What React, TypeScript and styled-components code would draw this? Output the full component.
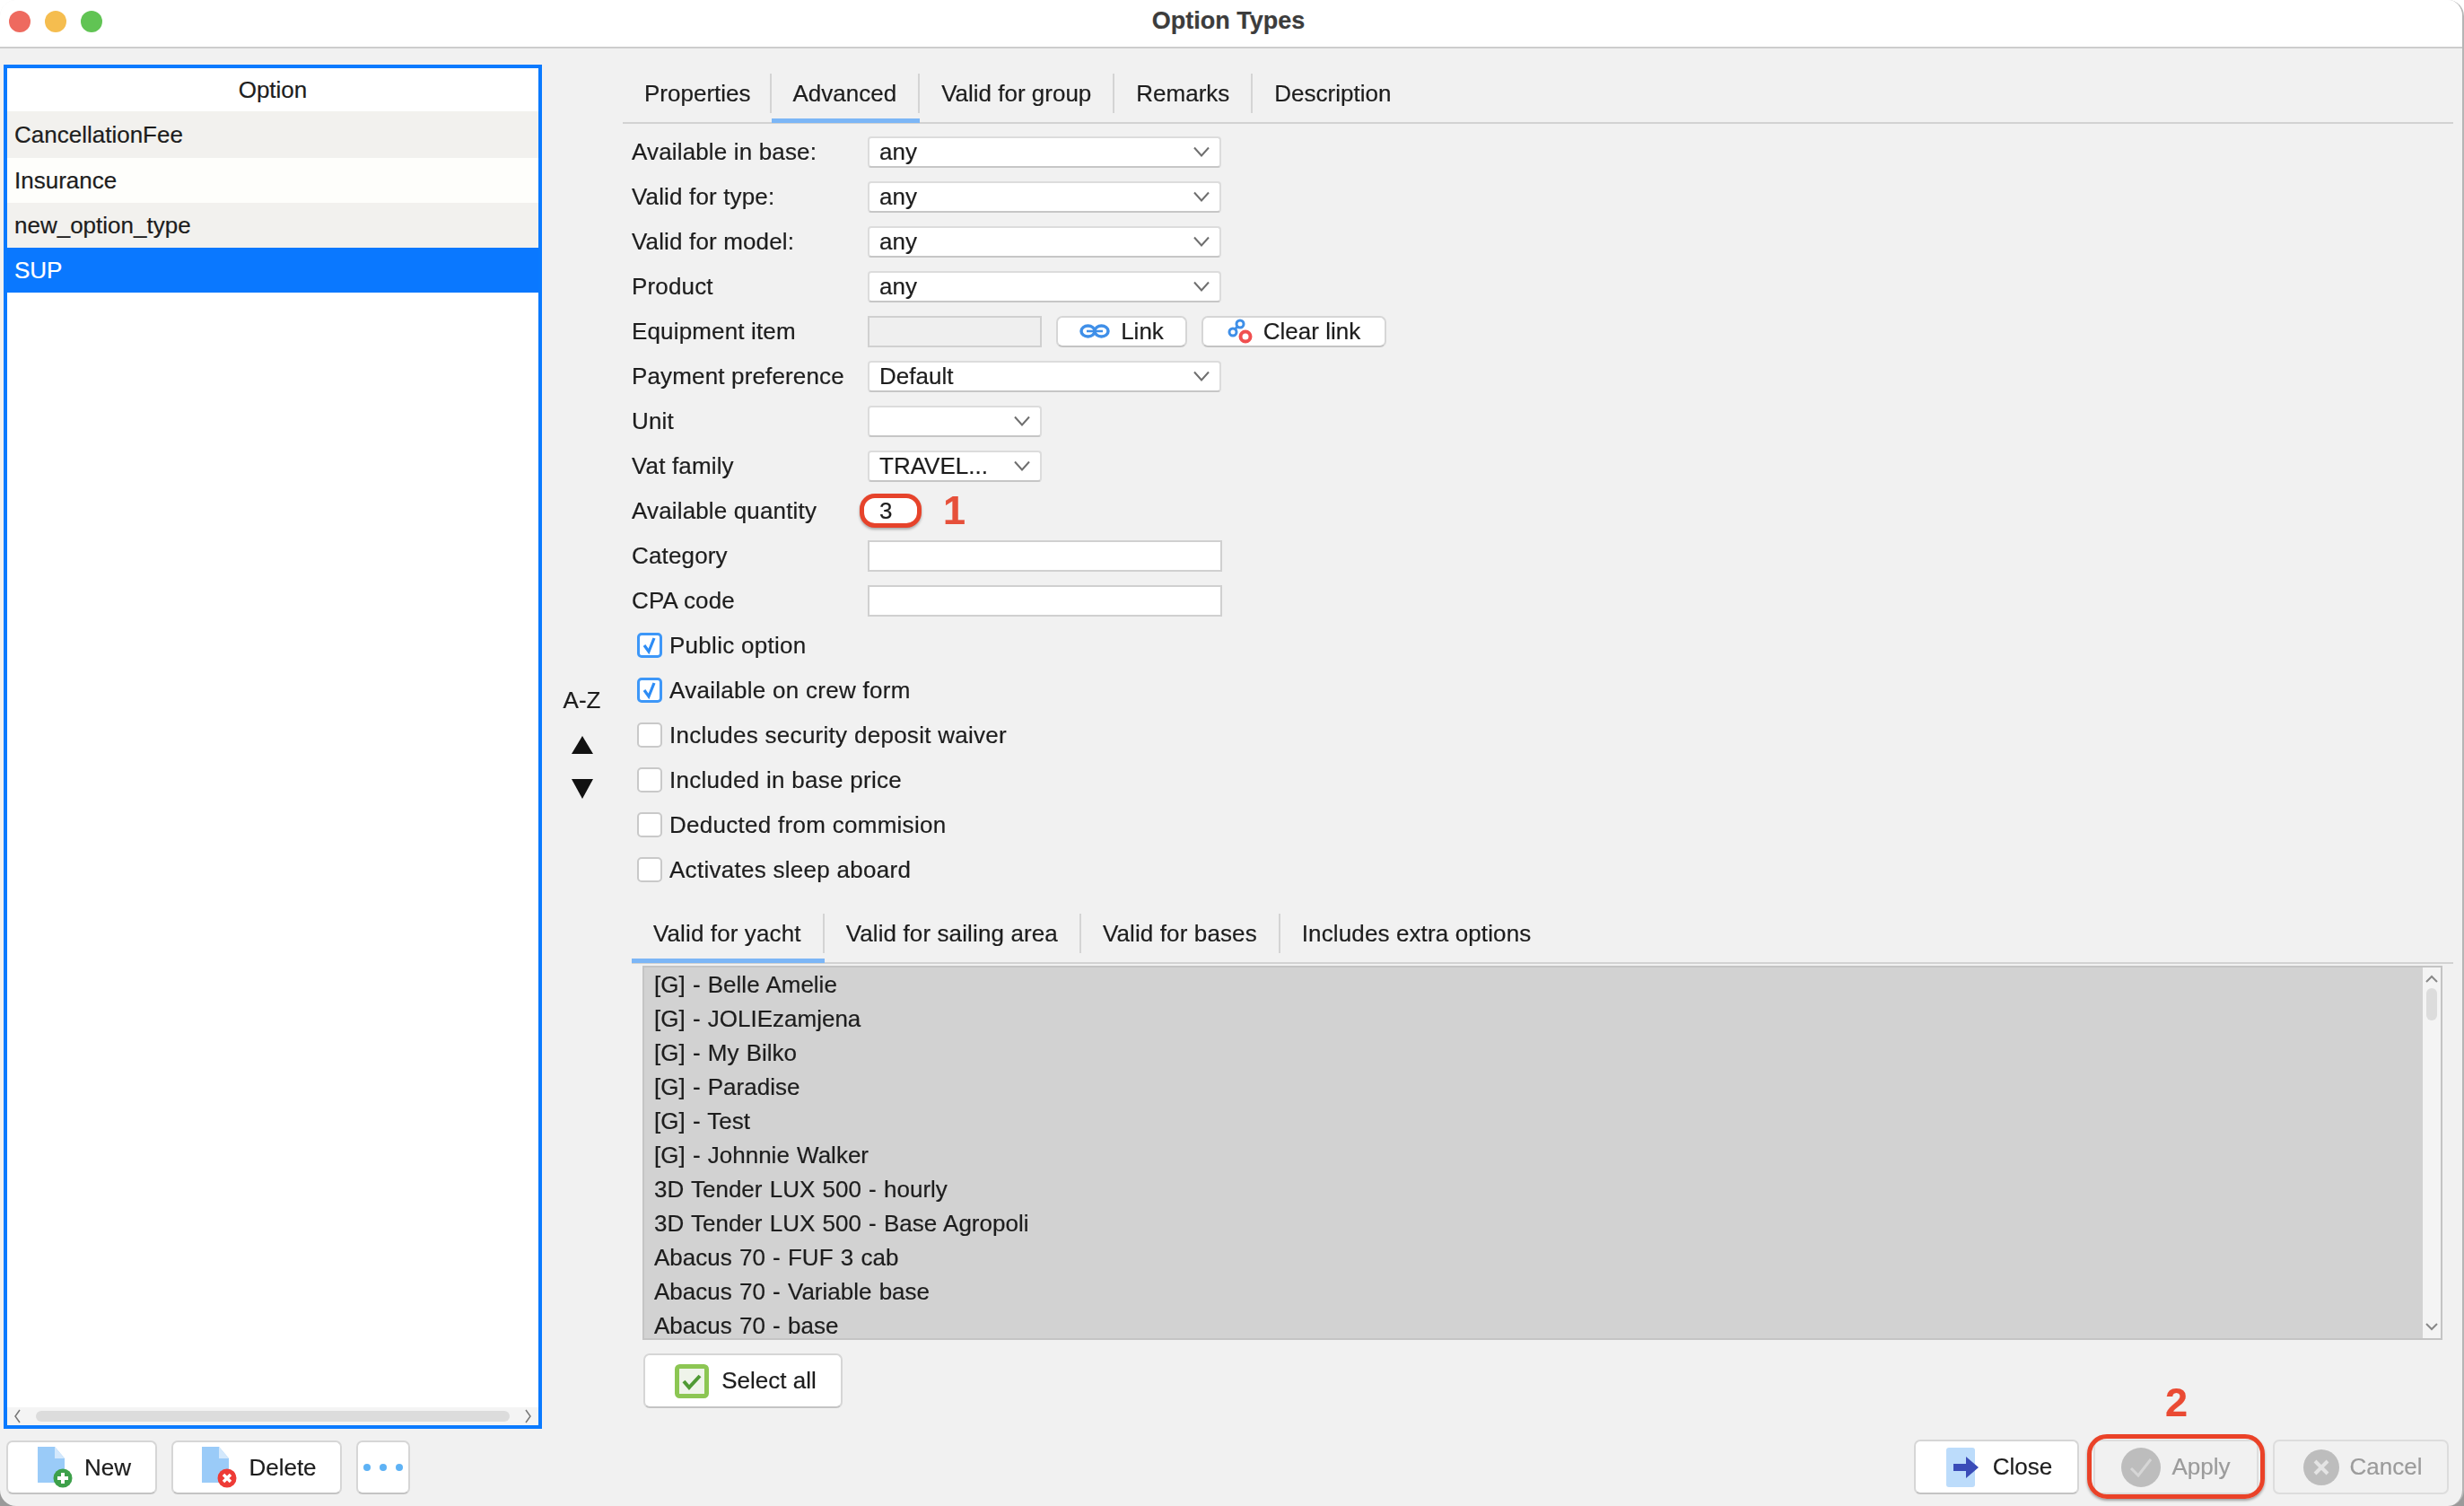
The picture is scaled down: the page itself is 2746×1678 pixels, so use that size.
import styled, { createGlobalStyle } from 'styled-components';

const GlobalStyle = createGlobalStyle`
  html, body { margin: 0; padding: 0; background: linear-gradient(#ffffff 50%, #9a9a9a 50%); }
  body {
    font-family: "Liberation Sans", Arial, sans-serif;
    font-size: 26px;
    color: #1d1d1d;
    -webkit-text-stroke: 0.2px currentColor;
  }
`;

const Window = styled.div`
  width: 2746px;
  height: 1678px;
  box-sizing: border-box;
  display: flex;
  flex-direction: column;
  overflow: hidden;
  background: #f1f1f1;
  border-right: 2px solid #b5b5b5;
  border-radius: 18px;
  filter: blur(0.45px);
`;

const TitleBar = styled.div`
  height: 54px;
  flex: none;
  box-sizing: border-box;
  position: relative;
  display: flex;
  align-items: center;
  justify-content: center;
  padding: 0 6px 6px 0;
  background: #fff;
  border-bottom: 2px solid #cdcdcd;
`;

const Lights = styled.div`
  position: absolute;
  left: 10px;
  top: 12px;
  display: flex;
  gap: 16px;
`;

const Light = styled.span<{ $color: string }>`
  width: 24px;
  height: 24px;
  border-radius: 50%;
  background: ${(p) => p.$color};
`;

const Title = styled.div`
  font-size: 27px;
  font-weight: 700;
  color: #3c3c3c;
`;

const Main = styled.div`
  flex: 1;
  display: flex;
  padding: 18px 0 0 4px;
  min-height: 0;
`;

const LeftColumn = styled.div`
  width: 600px;
  flex: none;
  display: flex;
  flex-direction: column;
`;

const OptionPanel = styled.div`
  height: 1520px;
  box-sizing: border-box;
  display: flex;
  flex-direction: column;
  background: #fff;
  border: 4px solid #0a7aff;
`;

const OptionHeader = styled.div`
  height: 48px;
  flex: none;
  display: flex;
  align-items: center;
  justify-content: center;
`;

const OptionRow = styled.div<{ $bg: string; $selected?: boolean; $first?: boolean }>`
  height: ${(p) => (p.$first ? 52 : 50)}px;
  flex: none;
  display: flex;
  align-items: center;
  padding-left: 8px;
  background: ${(p) => p.$bg};
  color: ${(p) => (p.$selected ? '#fff' : '#1d1d1d')};
`;

const OptionFill = styled.div`
  flex: 1;
`;

const HScroll = styled.div`
  height: 20px;
  flex: none;
  display: flex;
  align-items: center;
  justify-content: space-between;
  padding: 0 6px;
  background: #f4f4f4;
`;

const HThumb = styled.div`
  width: 528px;
  height: 12px;
  border-radius: 6px;
  background: #dcdcdc;
`;

const BottomLeft = styled.div`
  display: flex;
  gap: 16px;
  margin: 13px 0 0 3px;
`;

const Button = styled.div<{ $width: number; $height?: number; $off?: boolean; $shift?: number; $gap?: number }>`
  width: ${(p) => p.$width}px;
  height: ${(p) => p.$height ?? 60}px;
  box-sizing: border-box;
  flex: none;
  position: relative;
  display: flex;
  align-items: center;
  justify-content: center;
  gap: ${(p) => p.$gap ?? 12}px;
  padding-left: ${(p) => p.$shift ?? 0}px;
  border-radius: 7px;
  border: 2px solid ${(p) => (p.$off ? '#dddddd' : '#d6d6d6')};
  border-bottom-color: ${(p) => (p.$off ? '#dddddd' : '#c4c4c4')};
  background: ${(p) => (p.$off ? 'transparent' : '#fff')};
  color: ${(p) => (p.$off ? '#9b9b9b' : '#1d1d1d')};
`;

const ApplyRing = styled.div`
  position: absolute;
  inset: -8px -9px -7px -9px;
  border: 5px solid #ea4228;
  border-radius: 22px;
  box-shadow: 0 2px 3px rgba(0, 0, 0, 0.35);
`;

const StepTwo = styled.div`
  position: absolute;
  top: -68px;
  left: 78px;
  font-size: 45px;
  font-weight: 700;
  line-height: 50px;
  color: #ea4a33;
`;

const SortColumn = styled.div`
  width: 84px;
  flex: none;
  box-sizing: border-box;
  display: flex;
  flex-direction: column;
  align-items: center;
  padding: 690px 0 0 5px;
  gap: 22px;
`;

const SortLabel = styled.div`
  line-height: 36px;
`;

const SortDown = styled.svg`
  margin-top: 6px;
`;

const RightColumn = styled.div`
  flex: 1;
  min-width: 0;
  display: flex;
  flex-direction: column;
  padding: 10px 10px 0 0;
`;

const TabBar = styled.div<{ $indent: number; $spacing: number }>`
  height: 56px;
  flex: none;
  box-sizing: border-box;
  display: flex;
  align-items: flex-start;
  margin-left: ${(p) => p.$indent}px;
  letter-spacing: ${(p) => p.$spacing}px;
  border-bottom: 2px solid #d2d2d2;
`;

const Tab = styled.div<{ $active?: boolean }>`
  height: 55px;
  box-sizing: border-box;
  padding-bottom: 6px;
  border-bottom: 5px solid ${(p) => (p.$active ? '#7cb6f6' : 'transparent')};
`;

const TabLabel = styled.div<{ $last?: boolean; $trim?: number }>`
  height: 44px;
  box-sizing: border-box;
  display: flex;
  align-items: center;
  padding: 0 ${(p) => 24 - (p.$trim ?? 0)}px 0 24px;
  border-right: 2px solid ${(p) => (p.$last ? 'transparent' : '#d4d4d4')};
`;

const Form = styled.div`
  padding-top: 6px;
  display: flex;
  flex-direction: column;
`;

const Row = styled.div`
  height: 50px;
  flex: none;
  display: flex;
  align-items: center;
  padding-left: 16px;
`;

const Label = styled.div`
  width: 263px;
  flex: none;
  letter-spacing: 0.15px;
`;

const Select = styled.div<{ $width: number }>`
  width: ${(p) => p.$width}px;
  height: 35px;
  box-sizing: border-box;
  display: flex;
  align-items: center;
  justify-content: space-between;
  padding: 0 10px 0 11px;
  background: #fff;
  border: 2px solid #dcdcdc;
  border-bottom-color: #c6c6c6;
  border-radius: 4px;
`;

const Input = styled.div<{ $width: number; $off?: boolean }>`
  width: ${(p) => p.$width}px;
  height: 35px;
  box-sizing: border-box;
  background: ${(p) => (p.$off ? '#efefef' : '#fff')};
  border: 2px solid #d0d0d0;
`;

const LinkButtons = styled.div`
  display: flex;
  gap: 16px;
  margin-left: 16px;
`;

const QtyField = styled.div`
  width: 69px;
  height: 38px;
  box-sizing: border-box;
  display: flex;
  align-items: center;
  margin-left: -9px;
  padding-left: 17px;
  background: #fff;
  border: 5px solid #e6432b;
  border-radius: 17px;
  box-shadow: 0 2px 3px rgba(0, 0, 0, 0.3);
`;

const StepOne = styled.div`
  margin-left: 24px;
  font-size: 45px;
  font-weight: 700;
  line-height: 36px;
  color: #e6503a;
`;

const CheckRow = styled.div`
  height: 50px;
  flex: none;
  display: flex;
  align-items: center;
  gap: 8px;
  padding-left: 22px;
  letter-spacing: 0.28px;
`;

const CheckBox = styled.div<{ $on?: boolean }>`
  width: 28px;
  height: 28px;
  box-sizing: border-box;
  display: flex;
  align-items: center;
  justify-content: center;
  background: #fff;
  border: ${(p) => (p.$on ? '3px solid #3d97f8' : '2px solid #c9c9c9')};
  border-radius: 5px;
`;

const LowerTabs = styled.div`
  margin-top: 24px;
`;

const YachtList = styled.div`
  height: 417px;
  flex: none;
  box-sizing: border-box;
  display: flex;
  margin: 2px 12px 0 28px;
  background: #d2d2d2;
  border: 2px solid #c4c4c4;
  overflow: hidden;
`;

const YachtRows = styled.div`
  flex: 1;
  min-width: 0;
`;

const YachtRow = styled.div`
  height: 38px;
  display: flex;
  align-items: center;
  padding-left: 11px;
  word-spacing: 1px;
`;

const VScroll = styled.div`
  width: 20px;
  flex: none;
  display: flex;
  flex-direction: column;
  align-items: center;
  padding: 8px 0;
  background: #f4f4f4;
`;

const VThumb = styled.div`
  width: 12px;
  height: 36px;
  margin-top: 6px;
  border-radius: 6px;
  background: #dcdcdc;
`;

const VSpacer = styled.div`
  flex: 1;
`;

const SelectAllWrap = styled.div`
  margin: 15px 0 0 29px;
`;

const BottomRight = styled.div`
  display: flex;
  justify-content: flex-end;
  gap: 16px;
  margin-top: 35px;
  padding-right: 5px;
`;

const Chevron = () => (
  <svg width="20" height="12" viewBox="0 0 20 12" fill="none">
    <path d="M2 1.5 10 10.5 18 1.5" stroke="#6f6f6f" strokeWidth="2" />
  </svg>
);

const DocIcon = ({ color, kind }: { color: string; kind: 'plus' | 'x' }) => (
  <svg width="40" height="46" viewBox="0 0 40 46">
    <path d="M0 0H19L30 13V40H0Z" fill="#9acbf8" />
    <path d="M19 0 30 13H19Z" fill="#d3e8fc" />
    <circle cx="28" cy="35" r="10.5" fill={color} />
    {kind === 'plus' ? (
      <path d="M28 29V41M22 35H34" stroke="#fff" strokeWidth="4" />
    ) : (
      <path d="M24 31 32 39M32 31 24 39" stroke="#fff" strokeWidth="3.5" />
    )}
  </svg>
);

const LinkIcon = () => (
  <svg width="34" height="18" viewBox="0 0 34 18" fill="none">
    <ellipse cx="9.5" cy="9" rx="7.5" ry="6" stroke="#3f8fe8" strokeWidth="3.5" />
    <ellipse cx="24.5" cy="9" rx="7.5" ry="6" stroke="#3f8fe8" strokeWidth="3.5" />
    <path d="M8 9H26" stroke="#3f8fe8" strokeWidth="2.5" />
  </svg>
);

const ClearLinkIcon = () => (
  <svg width="28" height="28" viewBox="0 0 28 28" fill="none">
    <circle cx="6" cy="15" r="4" stroke="#3f8fe8" strokeWidth="3" />
    <circle cx="14" cy="6" r="4" stroke="#3f8fe8" strokeWidth="3" />
    <path d="M8 12 12 8" stroke="#3f8fe8" strokeWidth="3" />
    <circle cx="20" cy="20" r="5.5" stroke="#f04f4f" strokeWidth="4" />
  </svg>
);

const BlueCheck = () => (
  <svg width="20" height="22" viewBox="0 0 20 22" fill="none">
    <path d="M4 11 9 18 15 3" stroke="#2d8cf5" strokeWidth="3.2" />
  </svg>
);

const SelectAllIcon = () => (
  <svg width="38" height="38" viewBox="0 0 38 38">
    <rect x="2.5" y="2.5" width="33" height="33" rx="3" fill="#eff4ea" stroke="#8cc653" strokeWidth="5" />
    <path d="M10 19 16 26 28 13" fill="none" stroke="#4f9a34" strokeWidth="4" />
  </svg>
);

const CloseIcon = () => (
  <svg width="36" height="44" viewBox="0 0 36 44">
    <rect x="0" y="0" width="32" height="44" rx="3" fill="#bcdcfb" />
    <path d="M8 18H22V10L36 22 22 34V26H8Z" fill="#3a4cb8" />
  </svg>
);

const ApplyIcon = () => (
  <svg width="44" height="44" viewBox="0 0 44 44" fill="none">
    <circle cx="22" cy="22" r="22" fill="#bdbdbd" />
    <path d="M11 23 19 31 33 13" stroke="#d6d6d6" strokeWidth="3" />
  </svg>
);

const CancelIcon = () => (
  <svg width="40" height="40" viewBox="0 0 40 40" fill="none">
    <circle cx="20" cy="20" r="20" fill="#bdbdbd" />
    <path d="M13 13 27 27M27 13 13 27" stroke="#e4e4e4" strokeWidth="4" />
  </svg>
);

const Dots = () => (
  <svg width="46" height="10" viewBox="0 0 46 10">
    <circle cx="5" cy="5" r="4" fill="#5eb2f5" />
    <circle cx="23" cy="5" r="4" fill="#5eb2f5" />
    <circle cx="41" cy="5" r="4" fill="#5eb2f5" />
  </svg>
);

const topTabs = ['Properties', 'Advanced', 'Valid for group', 'Remarks', 'Description'];
const lowerTabs = ['Valid for yacht', 'Valid for sailing area', 'Valid for bases', 'Includes extra options'];

const checks = [
  { text: 'Public option', on: true },
  { text: 'Available on crew form', on: true },
  { text: 'Includes security deposit waiver', on: false },
  { text: 'Included in base price', on: false },
  { text: 'Deducted from commision', on: false },
  { text: 'Activates sleep aboard', on: false },
];

const yachts = [
  '[G] - Belle Amelie',
  '[G] - JOLIEzamjena',
  '[G] - My Bilko',
  '[G] - Paradise',
  '[G] - Test',
  '[G] - Johnnie Walker',
  '3D Tender LUX 500 - hourly',
  '3D Tender LUX 500 - Base Agropoli',
  'Abacus 70 - FUF 3 cab',
  'Abacus 70 - Variable base',
  'Abacus 70 - base',
];

function SelectRow({ label, value, width }: { label: string; value: string; width: number }) {
  return (
    <Row>
      <Label>{label}</Label>
      <Select $width={width}>
        <span>{value}</span>
        <Chevron />
      </Select>
    </Row>
  );
}

export default function App() {
  return (
    <>
      <GlobalStyle />
      <Window>
        <TitleBar>
          <Lights>
            <Light $color="#ee6a5f" />
            <Light $color="#f5bd4f" />
            <Light $color="#61c454" />
          </Lights>
          <Title>Option Types</Title>
        </TitleBar>
        <Main>
          <LeftColumn>
            <OptionPanel>
              <OptionHeader>Option</OptionHeader>
              <OptionRow $bg="#f2f1ee" $first>CancellationFee</OptionRow>
              <OptionRow $bg="#fefefb">Insurance</OptionRow>
              <OptionRow $bg="#f2f1ee">new_option_type</OptionRow>
              <OptionRow $bg="#0a78ff" $selected>SUP</OptionRow>
              <OptionFill />
              <HScroll>
                <svg width="10" height="16" viewBox="0 0 10 16" fill="none">
                  <path d="M8 1 3 8 8 15" stroke="#777" strokeWidth="1.5" />
                </svg>
                <HThumb />
                <svg width="10" height="16" viewBox="0 0 10 16" fill="none">
                  <path d="M2 1 7 8 2 15" stroke="#777" strokeWidth="1.5" />
                </svg>
              </HScroll>
            </OptionPanel>
            <BottomLeft>
              <Button $width={168} $shift={6}>
                <DocIcon color="#3da04a" kind="plus" />
                New
              </Button>
              <Button $width={190} $shift={6}>
                <DocIcon color="#ee3b36" kind="x" />
                Delete
              </Button>
              <Button $width={60}>
                <Dots />
              </Button>
            </BottomLeft>
          </LeftColumn>

          <SortColumn>
            <SortLabel>A-Z</SortLabel>
            <svg width="24" height="20" viewBox="0 0 24 20">
              <path d="M12 0 24 20H0Z" fill="#111" />
            </svg>
            <SortDown width="24" height="22" viewBox="0 0 24 22">
              <path d="M0 0H24L12 22Z" fill="#111" />
            </SortDown>
          </SortColumn>

          <RightColumn>
            <TabBar $indent={6} $spacing={0}>
              {topTabs.map((t, i) => (
                <Tab key={t} $active={t === 'Advanced'}>
                  <TabLabel $last={i === topTabs.length - 1} $trim={i === 0 ? 3 : 0}>{t}</TabLabel>
                </Tab>
              ))}
            </TabBar>
            <Form>
              <SelectRow label="Available in base:" value="any" width={394} />
              <SelectRow label="Valid for type:" value="any" width={394} />
              <SelectRow label="Valid for model:" value="any" width={394} />
              <SelectRow label="Product" value="any" width={394} />
              <Row>
                <Label>Equipment item</Label>
                <Input $width={194} $off />
                <LinkButtons>
                  <Button $width={146} $height={35}>
                    <LinkIcon />
                    Link
                  </Button>
                  <Button $width={206} $height={35}>
                    <ClearLinkIcon />
                    Clear link
                  </Button>
                </LinkButtons>
              </Row>
              <SelectRow label="Payment preference" value="Default" width={394} />
              <SelectRow label="Unit" value="" width={194} />
              <SelectRow label="Vat family" value="TRAVEL..." width={194} />
              <Row>
                <Label>Available quantity</Label>
                <QtyField>3</QtyField>
                <StepOne>1</StepOne>
              </Row>
              <Row>
                <Label>Category</Label>
                <Input $width={395} />
              </Row>
              <Row>
                <Label>CPA code</Label>
                <Input $width={395} />
              </Row>
              {checks.map((c) => (
                <CheckRow key={c.text}>
                  <CheckBox $on={c.on}>{c.on && <BlueCheck />}</CheckBox>
                  {c.text}
                </CheckRow>
              ))}
            </Form>
            <LowerTabs>
              <TabBar $indent={16} $spacing={0.12}>
                {lowerTabs.map((t, i) => (
                  <Tab key={t} $active={i === 0}>
                    <TabLabel $last={i === lowerTabs.length - 1}>{t}</TabLabel>
                  </Tab>
                ))}
              </TabBar>
            </LowerTabs>
            <YachtList>
              <YachtRows>
                {yachts.map((y) => (
                  <YachtRow key={y}>{y}</YachtRow>
                ))}
              </YachtRows>
              <VScroll>
                <svg width="14" height="9" viewBox="0 0 14 9" fill="none">
                  <path d="M1 8 7 2 13 8" stroke="#888" strokeWidth="2" />
                </svg>
                <VThumb />
                <VSpacer />
                <svg width="14" height="9" viewBox="0 0 14 9" fill="none">
                  <path d="M1 1 7 7 13 1" stroke="#888" strokeWidth="2" />
                </svg>
              </VScroll>
            </YachtList>
            <SelectAllWrap>
              <Button $width={222} $height={61} $shift={6} $gap={14}>
                <SelectAllIcon />
                Select all
              </Button>
            </SelectAllWrap>
            <BottomRight>
              <Button $width={184} $height={61} $shift={6} $gap={16}>
                <CloseIcon />
                Close
              </Button>
              <Button $width={184} $height={61} $off>
                <ApplyIcon />
                Apply
                <ApplyRing />
                <StepTwo>2</StepTwo>
              </Button>
              <Button $width={196} $height={61} $off $shift={4}>
                <CancelIcon />
                Cancel
              </Button>
            </BottomRight>
          </RightColumn>
        </Main>
      </Window>
    </>
  );
}
